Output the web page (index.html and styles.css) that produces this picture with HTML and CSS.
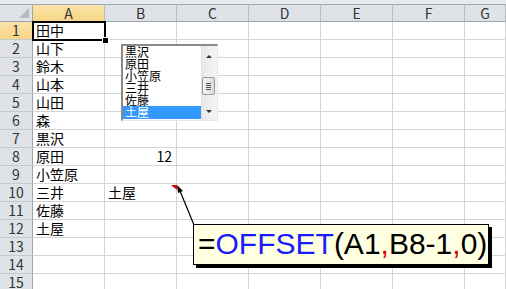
FILE: index.html
```html
<!DOCTYPE html>
<html lang="ja">
<head>
  <meta charset="UTF-8" />
  <title>OFFSET</title>
  <link rel="stylesheet" href="styles.css">
</head>
<body>

  <div class="ribbon-edge"></div>
  <div class="sheet" id="sheet"></div>

  <!-- list box control sitting over B2:C7 -->
  <div class="listbox">
    <ul class="list-items">
      <li>黒沢</li>
      <li>原田</li>
      <li>小笠原</li>
      <li>三井</li>
      <li>佐藤</li>
      <li class="selected">土屋</li>
    </ul>
    <div class="scrollbar">
      <span class="arrow up"></span>
      <span class="thumb"><i></i><i></i><i></i><i></i></span>
      <span class="arrow down"></span>
    </div>
  </div>

  <!-- comment callout for B10 -->
  <svg class="pointer" width="506" height="289" viewBox="0 0 506 289">
    <polygon points="171,185 177,185 177,190" fill="#e00000" />
    <line x1="194" y1="225" x2="180" y2="191" stroke="#000" stroke-width="1.2" />
    <polygon points="177,185 183,191 178,193" fill="#000" />
  </svg>
  <div class="comment">=<span class="fn">OFFSET</span>(A1<span class="sep">,</span>B8-1<span class="sep">,</span>0)</div>

  <script>
    const cols = ['A', 'B', 'C', 'D', 'E', 'F', 'G'];
    const values = {
      A1: '田中', A2: '山下', A3: '鈴木', A4: '山本', A5: '山田', A6: '森',
      A7: '黒沢', A8: '原田', A9: '小笠原', A10: '三井', A11: '佐藤', A12: '土屋',
      B8: '12', B10: '土屋'
    };

    function buildSheet() {
      const sheet = document.getElementById('sheet');
      let html = '<div class="corner"></div>';

      cols.forEach(c => {
        html += `<div class="col-head${c === 'A' ? ' active' : ''}">${c}</div>`;
      });

      for (let r = 1; r <= 15; r++) {
        html += `<div class="row-head${r === 1 ? ' active' : ''}">${r}</div>`;
        cols.forEach(c => {
          const v = values[c + r] || '';
          const num = v !== '' && !isNaN(v);
          let cls = 'cell';
          if (num) cls += ' num';
          if (c + r === 'A1') cls += ' current';
          html += `<div class="${cls}">${v}</div>`;
        });
      }
      sheet.innerHTML = html;
    }

    buildSheet();
  </script>
</body>
</html>
```

FILE: styles.css
```css
body {
  margin: 0;
  width: 506px;
  height: 289px;
  overflow: hidden;
  background: #fff;
  font-family: "Noto Sans CJK JP", "Noto Sans", sans-serif;
  position: relative;
}

.ribbon-edge {
  height: 4px;
  background: #e8ebef;
  border-bottom: 1px solid #9ea6b0;
}

.sheet {
  display: grid;
  grid-template-columns: 33px repeat(6, 72px) 1fr;
  grid-template-rows: 17px;
  grid-auto-rows: 18px;
}

.sheet > div {
  box-sizing: border-box;
  font-size: 14px;
  line-height: 17px;
  white-space: nowrap;
  overflow: hidden;
}

.corner {
  background: #dfe3e8;
  border-right: 1px solid #9ea6b0;
  border-bottom: 1px solid #9ea6b0;
  position: relative;
}

.corner::after {
  content: "";
  position: absolute;
  right: 3px;
  bottom: 3px;
  border-style: solid;
  border-width: 0 0 10px 10px;
  border-color: transparent transparent #b4bac2 transparent;
}

.sheet > .col-head {
  background: #dfe3e8;
  color: #333;
  text-align: center;
  line-height: 16px;
  border-right: 1px solid #b6bcc4;
  border-bottom: 1px solid #9ea6b0;
}

.row-head {
  background: #dfe3e8;
  color: #333;
  text-align: center;
  border-right: 1px solid #9ea6b0;
  border-bottom: 1px solid #c4cad1;
}

.sheet > .col-head.active {
  background: linear-gradient(#fae3a8, #f8d585);
  border-bottom: 1px solid #f2b33f;
}

.row-head.active {
  background: linear-gradient(#fae3a8, #f8d585);
  border-right: 1px solid #f2b33f;
}

.cell {
  border-right: 1px solid #d4d4d4;
  border-bottom: 1px solid #d4d4d4;
  padding-left: 3px;
  color: #000;
}

.cell.num {
  text-align: right;
  padding-right: 4px;
}

.sheet > .cell.current {
  position: relative;
  overflow: visible;
  box-shadow: inset 0 0 0 2px #000;
  margin: -1px 0 0 -1px;
  padding-left: 4px;
  padding-top: 1px;
  border: none;
  width: 74px;
  height: 20px;
}

.cell.current::after {
  content: "";
  position: absolute;
  right: -3px;
  bottom: -3px;
  width: 5px;
  height: 5px;
  background: #000;
  border: 1px solid #fff;
}

/* list box */
.listbox {
  position: absolute;
  left: 121px;
  top: 44px;
  width: 97px;
  height: 77px;
  box-sizing: border-box;
  background: #fff;
  border-top: 2px solid #8a8a8a;
  border-left: 2px solid #8a8a8a;
  border-right: 1px solid #e6e6e6;
  border-bottom: 1px solid #e6e6e6;
  display: flex;
}

.list-items {
  list-style: none;
  margin: 0;
  padding: 0;
  flex: 1;
}

.list-items li {
  font-size: 12px;
  line-height: 12px;
  height: 12px;
  padding-left: 2px;
  color: #000;
}

.list-items li.selected {
  background: #3399ff;
  color: #fff;
  height: 13px;
}

.scrollbar {
  width: 15px;
  background: linear-gradient(90deg, #e9e9e9, #f4f4f4);
  border-left: 1px solid #e0e0e0;
  position: relative;
}

.arrow {
  position: absolute;
  left: 4px;
  width: 0;
  height: 0;
  border-left: 3px solid transparent;
  border-right: 3px solid transparent;
}

.arrow.up {
  top: 9px;
  border-bottom: 3px solid #333;
}

.arrow.down {
  bottom: 7px;
  border-top: 3px solid #333;
}

.thumb {
  position: absolute;
  left: 0;
  top: 31px;
  width: 13px;
  height: 18px;
  box-sizing: border-box;
  background: linear-gradient(90deg, #f4f4f4, #dcdcdc);
  border: 1px solid #9a9a9a;
  border-radius: 2px;
  display: flex;
  flex-direction: column;
  justify-content: center;
  gap: 1px;
  padding: 0 3px;
}

.thumb i {
  display: block;
  height: 1px;
  background: #555;
}

/* comment callout */
.pointer {
  position: absolute;
  left: 0;
  top: 0;
}

.comment {
  position: absolute;
  left: 193px;
  top: 224px;
  width: 296px;
  height: 41px;
  box-sizing: border-box;
  background: #ffffe1;
  border: 1px solid #000;
  box-shadow: 3px 3px 0 #000;
  font-family: "Liberation Sans", Arial, sans-serif;
  font-size: 30px;
  line-height: 38px;
  padding-left: 4px;
  color: #000;
  white-space: nowrap;
}

.comment .fn {
  color: #1a1aff;
}

.comment .sep {
  color: #e00000;
}
```
